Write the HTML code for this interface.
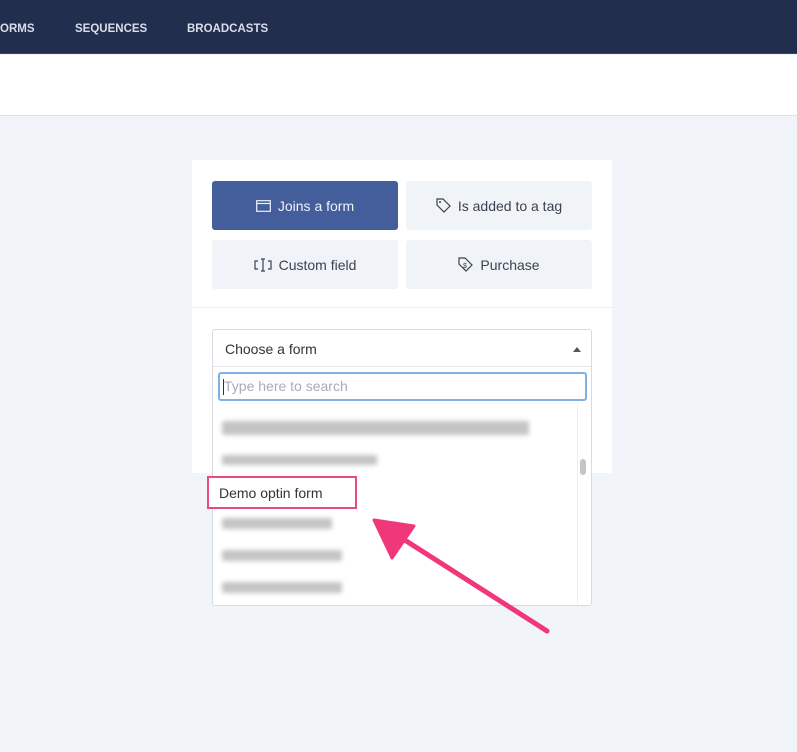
<!DOCTYPE html>
<html><head><meta charset="utf-8"><style>
*{box-sizing:border-box;margin:0;padding:0}
body{width:797px;height:752px;overflow:hidden;background:#f1f4f9;font-family:"Liberation Sans",sans-serif;position:relative}
.nav{position:absolute;left:0;top:0;width:797px;height:54px;background:#222e4e;border-bottom:1px solid #3a4560}
.nav span{position:absolute;top:23px;color:#d8deea;font-weight:bold;font-size:11.5px;letter-spacing:0}
.bar{position:absolute;left:0;top:55px;width:797px;height:61px;background:#fff;border-bottom:1px solid #dde2ea}
.card{position:absolute;left:192px;top:160px;width:420px;height:313px;background:#fff}
.btn{position:absolute;width:186px;height:49px;background:#f0f3f8;color:#3b4250;font-size:14px;display:flex;align-items:center;justify-content:center;gap:7px;border-radius:3px}
.btn.on{background:#435e9a;color:#eef2fa}
.sep{position:absolute;left:192px;top:307px;width:420px;height:1px;background:#eef0f4}
.sel{position:absolute;left:212px;top:329px;width:380px;height:277px;background:#fff;border:1px solid #d6dbe3;border-radius:3px}
.selhead{height:37px;border-bottom:1px solid #e3e6ec;padding:11px 12px;font-size:14px;color:#333}
.tri{position:absolute;right:10px;top:17px;width:0;height:0;border-left:4px solid transparent;border-right:4px solid transparent;border-bottom:5px solid #555}
.search{position:absolute;left:5px;top:42px;width:369px;height:29px;border:2px solid #7fb0e6;border-radius:3px;font-size:14px;color:#aab;padding:4px 4px;}
.search:before{content:"";position:absolute;left:3px;top:5px;width:1px;height:16px;background:#333}
.blur{position:absolute;height:11px;background:#c4c4c4;filter:blur(2.5px);border-radius:2px}
.sb{position:absolute;left:364px;top:74px;width:12px;height:200px;border-left:1px solid #eee}
.thumb{position:absolute;left:367px;top:129px;width:6px;height:16px;background:#c4c4c4;border-radius:3px}
.demo{position:absolute;left:207px;top:476px;width:150px;height:33px;border:2px solid #e94b80;font-size:14px;color:#333;padding:7px 10px;background:#fff}
</style></head><body>
<div class="nav"><span style="left:0">ORMS</span><span style="left:75px">SEQUENCES</span><span style="left:187px">BROADCASTS</span></div>
<div class="bar"></div>
<div class="card"></div>
<div class="btn on" style="left:212px;top:181px"><svg width="15" height="12" viewBox="0 0 15 12"><rect x=".7" y=".7" width="13.6" height="10.6" fill="none" stroke="#eef2fa" stroke-width="1.2"/><line x1="1" y1="3.5" x2="14" y2="3.5" stroke="#eef2fa" stroke-width="1.2"/></svg>Joins a form</div>
<div class="btn" style="left:406px;top:181px"><svg width="15" height="15" viewBox="0 0 15 15"><path d="M1 1h6l7 7-6 6-7-7z" fill="none" stroke="#3b4250" stroke-width="1.2"/><circle cx="4" cy="4" r="1" fill="#3b4250"/></svg>Is added to a tag</div>
<div class="btn" style="left:212px;top:240px"><svg width="18" height="14" viewBox="0 0 18 14"><path d="M4 3H1v8h3M14 3h3v8h-3M7 1h4M7 13h4M9 1v12" fill="none" stroke="#3b4250" stroke-width="1.2"/></svg>Custom field</div>
<div class="btn" style="left:406px;top:240px"><svg width="15" height="15" viewBox="0 0 15 15"><path d="M1 1h6l7 7-6 6-7-7z" fill="none" stroke="#3b4250" stroke-width="1.2"/><text x="5" y="11" font-size="7" fill="#3b4250" font-family="Liberation Sans">$</text></svg>Purchase</div>
<div class="sep"></div>
<div class="sel">
<div class="selhead">Choose a form</div><div class="tri"></div>
<div class="search">Type here to search</div>
<div class="blur" style="left:9px;top:91px;width:307px;height:14px"></div>
<div class="blur" style="left:9px;top:125px;width:155px;height:10px"></div>
<div class="blur" style="left:9px;top:188px;width:110px"></div>
<div class="blur" style="left:9px;top:220px;width:120px"></div>
<div class="blur" style="left:9px;top:252px;width:120px"></div>
<div class="sb"></div><div class="thumb"></div>
</div>
<div class="demo">Demo optin form</div>
<svg style="position:absolute;left:0;top:0" width="797" height="752"><line x1="547" y1="631" x2="400" y2="537" stroke="#f0377a" stroke-width="5" stroke-linecap="round"/><polygon points="374,520 414,526 392,558" fill="#f0377a" stroke="#f0377a" stroke-width="3" stroke-linejoin="round"/></svg>
</body></html>
